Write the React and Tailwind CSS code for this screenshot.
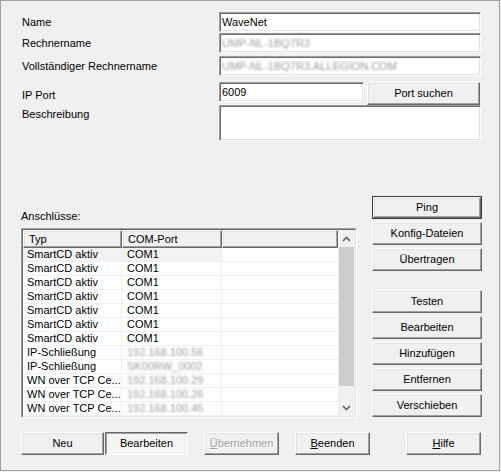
const raised =
  'border border-t-white border-l-white border-b-[#696969] border-r-[#696969] shadow-[inset_-1px_-1px_0_#a0a0a0,inset_1px_1px_0_#e3e3e3] bg-[#f0f0f0]';
const sunken =
  'border border-t-[#a0a0a0] border-l-[#a0a0a0] border-b-white border-r-white shadow-[inset_1px_1px_0_#696969,inset_-1px_-1px_0_#e3e3e3] bg-white';

const Button = ({ children, className = '', isDefault = false }) => {
  if (isDefault) {
    return (
      <div className={`border border-[#3c3c3c] ${className}`}>
        <div className={`${raised} h-full flex items-center justify-center`}>{children}</div>
      </div>
    );
  }
  return <div className={`${raised} flex items-center justify-center ${className}`}>{children}</div>;
};

// redacted values in the screenshot are pixelated, so soften them
const Blurred = ({ children }) => (
  <span className="inline-block text-[#9c9c9c] blur-[1.2px] select-none">{children}</span>
);

const rows = [
  ['SmartCD aktiv', 'COM1'],
  ['SmartCD aktiv', 'COM1'],
  ['SmartCD aktiv', 'COM1'],
  ['SmartCD aktiv', 'COM1'],
  ['SmartCD aktiv', 'COM1'],
  ['SmartCD aktiv', 'COM1'],
  ['SmartCD aktiv', 'COM1'],
  ['IP-Schließung', <Blurred key="a">192.168.100.56</Blurred>],
  ['IP-Schließung', <Blurred key="b">SK00RW_0002</Blurred>],
  ['WN over TCP Ce...', <Blurred key="c">192.168.100.29</Blurred>],
  ['WN over TCP Ce...', <Blurred key="d">192.168.100.26</Blurred>],
  ['WN over TCP Ce...', <Blurred key="e">192.168.100.45</Blurred>],
];

const Chevron = ({ down = false }) => (
  <svg width="9" height="6" viewBox="0 0 9 6">
    <polyline
      points={down ? '1,1 4.5,4.5 8,1' : '1,5 4.5,1.5 8,5'}
      fill="none"
      stroke="#606060"
      strokeWidth="1.6"
    />
  </svg>
);

export default function App() {
  return (
    <div className="w-[501px] h-[472px] bg-[#f0f0f0] text-[11px] leading-[13px] text-black font-['Liberation_Sans',Arial,sans-serif]">
      <div className="w-[500px] h-[471px] border border-[#a0a0a0] pt-[11px] pl-[20px]">
        {/* ── Kopfdaten ── */}
        <div className="flex items-center h-[20px]">
          <div className="w-[198px] pl-[1px]">Name</div>
          <div className={`${sunken} w-[262px] h-[20px] flex items-center pl-[2px]`}>WaveNet</div>
        </div>
        <div className="flex items-center h-[20px] mt-[1px]">
          <div className="w-[198px] pl-[1px]">Rechnername</div>
          <div className={`${sunken} w-[262px] h-[20px] flex items-center pl-[2px]`}>
            <Blurred>UMP-NL-1BQ7R3</Blurred>
          </div>
        </div>
        <div className="flex items-center h-[20px] mt-[3px]">
          <div className="w-[198px] pl-[1px]">Vollständiger Rechnername</div>
          <div className={`${sunken} w-[262px] h-[20px] flex items-center pl-[2px]`}>
            <Blurred>UMP-NL-1BQ7R3.ALLEGION.COM</Blurred>
          </div>
        </div>
        <div className="flex items-start mt-[6px]">
          <div className="w-[198px] pl-[1px] pt-[7px]">IP Port</div>
          <div className={`${sunken} w-[145px] h-[20px] flex items-center pl-[2px]`}>6009</div>
          <Button className="ml-[3px] w-[113px] h-[23px]">Port suchen</Button>
        </div>
        <div className="flex items-start">
          <div className="w-[198px] pl-[1px] pt-[3px]">Beschreibung</div>
          <div className={`${sunken} w-[262px] h-[36px]`} />
        </div>

        {/* ── Anschlüsse ── */}
        <div className="flex items-start mt-[55px]">
          <div className="w-[336px]">
            <div className="pt-[14px]">Anschlüsse:</div>
            <div className="mt-[5px] w-[336px] h-[190px] border border-t-[#a0a0a0] border-l-[#a0a0a0] border-b-white border-r-white">
              <div className="h-full border border-t-[#696969] border-l-[#696969] border-b-[#e3e3e3] border-r-[#e3e3e3] bg-white flex">
                <div className="flex-1 flex flex-col">
                  <div className="flex h-[18px]">
                    <div className={`${raised} w-[99px] pl-[5px] flex items-center`}>Typ</div>
                    <div className={`${raised} w-[100px] pl-[5px] flex items-center`}>COM-Port</div>
                    <div className={`${raised} flex-1`} />
                  </div>
                  {rows.map(([typ, port], i) => (
                    <div key={i} className="flex h-[14px] border-b border-[#f0f0f0]">
                      <div
                        className={`w-[99px] pl-[4px] border-r border-[#f0f0f0] whitespace-nowrap overflow-hidden ${
                          i === 0 ? 'bg-[#f2f2f2]' : ''
                        }`}
                      >
                        {typ}
                      </div>
                      <div
                        className={`w-[100px] pl-[5px] border-r border-[#f0f0f0] whitespace-nowrap overflow-hidden ${
                          i === 0 ? 'bg-[#f2f2f2]' : ''
                        }`}
                      >
                        {port}
                      </div>
                      <div className="flex-1" />
                    </div>
                  ))}
                </div>
                {/* Scrollbar */}
                <div className="w-[17px] bg-[#f0f0f0] flex flex-col">
                  <div className="h-[17px] flex items-center justify-center">
                    <Chevron />
                  </div>
                  <div className="h-[139px] mx-[1px] bg-[#cdcdcd]" />
                  <div className="flex-1" />
                  <div className="h-[17px] flex items-center justify-center">
                    <Chevron down />
                  </div>
                </div>
              </div>
            </div>
          </div>

          <div className="ml-[15px] w-[110px] flex flex-col gap-[3px]">
            <Button isDefault className="h-[23px]">Ping</Button>
            <Button className="h-[23px]">Konfig-Dateien</Button>
            <Button className="h-[23px]">Übertragen</Button>
            <Button className="h-[23px] mt-[16px]">Testen</Button>
            <Button className="h-[23px]">Bearbeiten</Button>
            <Button className="h-[23px]">Hinzufügen</Button>
            <Button className="h-[23px]">Entfernen</Button>
            <Button className="h-[23px]">Verschieben</Button>
          </div>
        </div>

        {/* ── Fußleiste ── */}
        <div className="flex mt-[14px]">
          <Button className="w-[83px] h-[23px]">Neu</Button>
          <div className="ml-[1px] w-[83px] h-[23px] flex items-center justify-center border border-t-[#696969] border-l-[#696969] border-b-white border-r-white shadow-[inset_1px_1px_0_#a0a0a0] bg-[repeating-conic-gradient(#ffffff_0%_25%,#ebebeb_0%_50%)] bg-[length:2px_2px]">
            Bearbeiten
          </div>
          <Button className="ml-[16px] w-[75px] h-[23px]">
            <span className="text-[#a0a0a0] [text-shadow:1px_1px_0_#fff]">
              <u>Ü</u>bernehmen
            </span>
          </Button>
          <Button className="ml-[16px] w-[75px] h-[23px]">
            <span>
              <u>B</u>eenden
            </span>
          </Button>
          <Button className="ml-[36px] w-[75px] h-[23px]">
            <span>
              <u>H</u>ilfe
            </span>
          </Button>
        </div>
      </div>
    </div>
  );
}
